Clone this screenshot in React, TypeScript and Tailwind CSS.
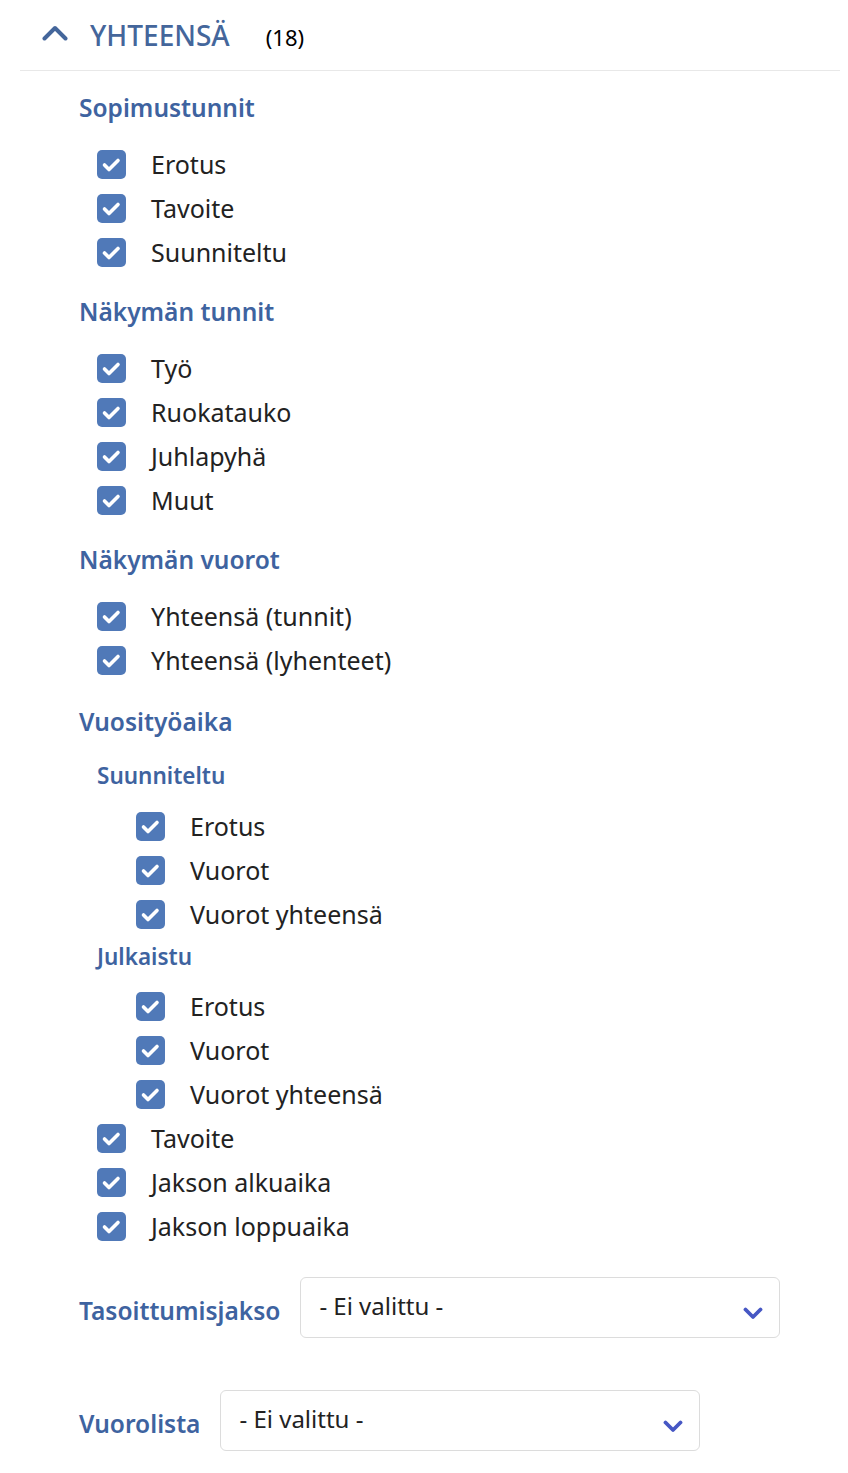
import React from "react";

type Row = { label: string; indent?: boolean };

const font = { fontFamily: '"Noto Sans", "Open Sans", sans-serif' };

function Check({ label, indent }: Row) {
  return (
    <div className={`flex h-[44px] items-center ${indent ? "pl-[57px]" : "pl-[18px]"}`}>
      <span className="flex h-[29px] w-[29px] shrink-0 items-center justify-center rounded-[5px] bg-[#5079b8]">
        <svg width="29" height="29" viewBox="0 0 29 29" fill="none">
          <path
            d="M7.5 15 L12 19.5 L21 10.5"
            stroke="white"
            strokeWidth="3.6"
            strokeLinecap="round"
            strokeLinejoin="round"
          />
        </svg>
      </span>
      <span className="ml-[25px] text-[25px] leading-none text-[#222]">{label}</span>
    </div>
  );
}

function Heading({ children, first }: { children: React.ReactNode; first?: boolean }) {
  return (
    <h3
      className={`${first ? "mt-[21px]" : "mt-[22px]"} mb-[18px] h-[32px] text-[24.5px] font-semibold leading-[32px] text-[#3e63a0]`}
    >
      {children}
    </h3>
  );
}

function SubHeading({ children, className }: { children: React.ReactNode; className: string }) {
  return (
    <h4
      className={`${className} h-[30px] pl-[18px] text-[22.5px] font-semibold leading-[30px] text-[#3e63a0]`}
    >
      {children}
    </h4>
  );
}

function Select({ label }: { label: string }) {
  return (
    <div className="flex items-center gap-[20px]">
      <span className="pt-[8px] text-[24.5px] font-semibold text-[#3e63a0]">{label}</span>
      <div className="flex h-[61px] w-[480px] items-center justify-between rounded-[6px] border border-[#dcdcdc] bg-white pl-[18px] pr-[16px]">
        <span className="-mt-[4px] text-[24px] text-[#222]">- Ei valittu -</span>
        <svg width="20" height="13" viewBox="0 0 20 13" className="mt-[12px]" fill="none">
          <path
            d="M2.5 2.5 L10 10 L17.5 2.5"
            stroke="#4657c4"
            strokeWidth="3.8"
            strokeLinecap="round"
            strokeLinejoin="round"
          />
        </svg>
      </div>
    </div>
  );
}

export default function App() {
  return (
    <div className="min-h-[1473px] w-[848px] bg-white pl-[20px] pr-[8px]" style={font}>
      <div className="flex h-[71px] items-center border-b border-[#e8e8e8] pl-[22px]">
        <svg width="26" height="18" viewBox="0 0 26 18" fill="none" className="-mt-[4px]">
          <path
            d="M2.5 14.5 L13 4 L23.5 14.5"
            stroke="#44669b"
            strokeWidth="4"
            strokeLinecap="round"
            strokeLinejoin="round"
          />
        </svg>
        <span className="ml-[22px] text-[28px] font-medium leading-none text-[#44669b]">YHTEENSÄ</span>
        <span className="ml-[36px] mt-[3px] text-[22px] leading-none text-black">(18)</span>
      </div>

      <div className="pl-[59px]">
        <Heading first>Sopimustunnit</Heading>
        <Check label="Erotus" />
        <Check label="Tavoite" />
        <Check label="Suunniteltu" />

        <Heading>Näkymän tunnit</Heading>
        <Check label="Työ" />
        <Check label="Ruokatauko" />
        <Check label="Juhlapyhä" />
        <Check label="Muut" />

        <Heading>Näkymän vuorot</Heading>
        <Check label="Yhteensä (tunnit)" />
        <Check label="Yhteensä (lyhenteet)" />

        <h3 className="mt-[24px] h-[32px] text-[24.5px] font-semibold leading-[32px] text-[#3e63a0]">
          Vuosityöaika
        </h3>
        <SubHeading className="mt-[23px] mb-[13px]">Suunniteltu</SubHeading>
        <Check label="Erotus" indent />
        <Check label="Vuorot" indent />
        <Check label="Vuorot yhteensä" indent />
        <SubHeading className="mt-[6px] mb-[12px]">Julkaistu</SubHeading>
        <Check label="Erotus" indent />
        <Check label="Vuorot" indent />
        <Check label="Vuorot yhteensä" indent />
        <Check label="Tavoite" />
        <Check label="Jakson alkuaika" />
        <Check label="Jakson loppuaika" />

        <div className="mt-[29px]">
          <Select label="Tasoittumisjakso" />
        </div>
        <div className="mt-[52px]">
          <Select label="Vuorolista" />
        </div>
      </div>
    </div>
  );
}
